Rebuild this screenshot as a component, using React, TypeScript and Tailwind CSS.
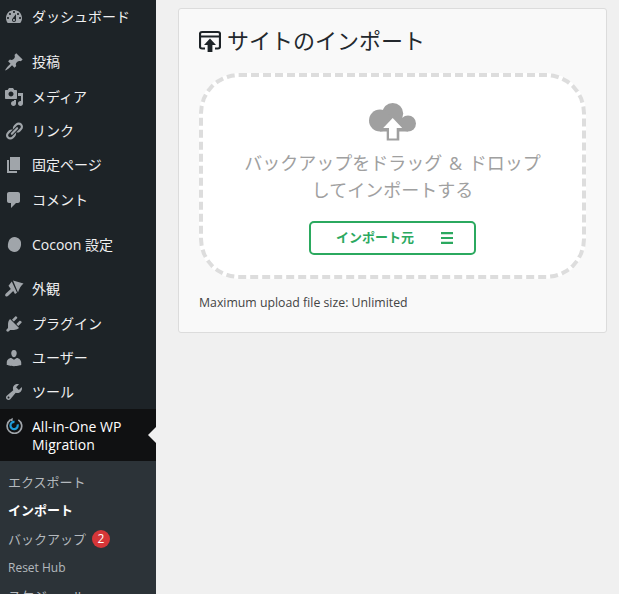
const fontStack = '[font-family:"Open_Sans","Noto_Sans_CJK_JP",sans-serif]'

const icons: Record<string, string> = {
  dashboard: 'M3.76 16h12.48c1.1-1.37 1.76-3.11 1.76-5 0-4.42-3.58-8-8-8s-8 3.58-8 8c0 1.89.66 3.63 1.76 5zM10 4c.55 0 1 .45 1 1s-.45 1-1 1-1-.45-1-1 .45-1 1-1zM6 6c.55 0 1 .45 1 1s-.45 1-1 1-1-.45-1-1 .45-1 1-1zm8 0c.55 0 1 .45 1 1s-.45 1-1 1-1-.45-1-1 .45-1 1-1zm-5.37 5.55L12 7v6c0 1.1-.9 2-2 2s-2-.9-2-2c0-.57.24-1.08.63-1.45zM4 10c.55 0 1 .45 1 1s-.45 1-1 1-1-.45-1-1 .45-1 1-1zm12 0c.55 0 1 .45 1 1s-.45 1-1 1-1-.45-1-1 .45-1 1-1zm-5 3c0-.55-.45-1-1-1s-1 .45-1 1 .45 1 1 1 1-.45 1-1z',
  post: 'M10.44 3.02l1.82-1.82 6.36 6.35-1.83 1.82c-1.05-.68-2.48-.57-3.41.36l-.75.75c-.92.93-1.04 2.35-.35 3.41l-1.83 1.82-2.41-2.41-2.8 2.79c-.42.42-3.38 2.71-3.8 2.29s1.86-3.39 2.28-3.81l2.79-2.79L4.1 9.36l1.83-1.82c1.05.69 2.48.57 3.4-.36l.75-.75c.93-.92 1.05-2.35.36-3.41z',
  media: 'M13 11V4c0-.55-.45-1-1-1h-1.67L9 1H5L3.67 3H2c-.55 0-1 .45-1 1v7c0 .55.45 1 1 1h10c.55 0 1-.45 1-1zM7 4.5c1.38 0 2.5 1.12 2.5 2.5S8.38 9.5 7 9.5 4.5 8.38 4.5 7 5.62 4.5 7 4.5zM14 6h5v10.5c0 1.38-1.12 2.5-2.5 2.5S14 17.88 14 16.5s1.12-2.5 2.5-2.5c.17 0 .34.02.5.05V9h-3V6zm-4 8.05V13h2v3.5c0 1.38-1.12 2.5-2.5 2.5S7 17.88 7 16.5 8.12 14 9.5 14c.17 0 .34.02.5.05z',
  links: 'M17.74 2.76c1.68 1.69 1.68 4.41 0 6.1l-1.53 1.52c-1.12 1.12-2.7 1.47-4.14 1.09l2.62-2.61.76-.77.76-.76c.84-.84.84-2.2 0-3.04-.84-.85-2.2-.85-3.04 0l-.77.76-3.38 3.38c-.37-1.44-.02-3.02 1.1-4.14l1.52-1.53c1.69-1.68 4.42-1.68 6.1 0zM8.59 13.43l5.34-5.34c.42-.42.42-1.1 0-1.52-.44-.43-1.13-.39-1.53 0l-5.33 5.34c-.42.42-.42 1.1 0 1.52.44.43 1.13.39 1.52 0zm-.76 2.29l4.14-4.15c.38 1.44.03 3.02-1.09 4.14l-1.52 1.53c-1.69 1.68-4.41 1.68-6.1 0-1.68-1.68-1.68-4.42 0-6.1l1.53-1.52c1.12-1.12 2.7-1.47 4.14-1.1l-4.14 4.15c-.85.84-.85 2.2 0 3.05.84.84 2.2.84 3.04 0z',
  page: 'M6 15V2h10v13H6zm-1 1h8v2H3V5h2v11z',
  comments: 'M5 2h9c1.1 0 2 .9 2 2v7c0 1.1-.9 2-2 2h-2l-5 5v-5H5c-1.1 0-2-.9-2-2V4c0-1.1.9-2 2-2z',
  appearance: 'M9 1.5L19.5 4.5C17 6.800 15.200 9.500 14 13.500zM7.800 2.500L13 13.800l-2 1.100-1.800-2.900-4.700 4.600c-1 .9-2 1.100-2.800.6-.8-.6-.7-1.700.2-2.700L6.800 10 4.500 6.800z',
  plugins: 'M13.11 4.36L9.87 7.6 8 5.73l3.24-3.24c.35-.34 1.05-.2 1.56.32.52.51.66 1.21.31 1.55zm-8 1.77l.91-1.12 9.01 9.01-1.19.84c-.71.71-2.63 1.16-3.82 1.16H6.14L4.9 17.26c-.59.59-1.54.59-2.12 0-.59-.58-.59-1.53 0-2.12l1.24-1.24v-3.88c0-1.13.4-3.19 1.09-3.89zm7.26 3.97l3.24-3.24c.34-.35 1.04-.21 1.55.31.52.51.66 1.21.31 1.55l-3.24 3.25z',
  users: 'M10 9.25c-2.27 0-2.73-3.44-2.73-3.44C7 4.02 7.82 2 9.97 2c2.16 0 2.98 2.02 2.71 3.81 0 0-.41 3.44-2.68 3.44zm0 2.57L12.72 10c2.39 0 4.52 2.33 4.52 4.53v2.49s-3.65 1.13-7.24 1.13c-3.65 0-7.24-1.13-7.24-1.13v-2.49c0-2.25 1.94-4.48 4.47-4.48z',
  tools: 'M16.68 9.77c-1.34 1.34-3.3 1.67-4.95.99l-5.41 6.52c-.99.99-2.59.99-3.58 0s-.99-2.59 0-3.57l6.52-5.42c-.68-1.65-.35-3.61.99-4.95 1.28-1.28 3.12-1.62 4.72-1.06l-2.89 2.89 2.82 2.82 2.86-2.87c.53 1.58.18 3.39-1.08 4.65zM3.81 16.21c.4.39 1.04.39 1.43 0 .4-.4.4-1.04 0-1.43-.39-.4-1.03-.4-1.43 0-.39.39-.39 1.03 0 1.43z',
}

function MenuIcon({ name }: { name: string }) {
  return (
    <svg className="w-5 h-5 shrink-0 text-[#a0a5aa]" viewBox="0 0 20 20" fill="currentColor">
      <path d={icons[name]} />
    </svg>
  )
}

function MenuItem({ icon, label, className = '' }: { icon: string; label: string; className?: string }) {
  return (
    <div className={`flex items-center h-[34.3px] pl-1 ${className}`}>
      <MenuIcon name={icon} />
      <span className="ml-2 text-sm text-[#f0f0f1]">{label}</span>
    </div>
  )
}

function Sidebar() {
  return (
    <div className="w-[156px] h-[594px] shrink-0 overflow-hidden bg-[#1d2327]">
      <MenuItem icon="dashboard" label="ダッシュボード" />
      <MenuItem icon="post" label="投稿" className="mt-[11px]" />
      <MenuItem icon="media" label="メディア" />
      <MenuItem icon="links" label="リンク" />
      <MenuItem icon="page" label="固定ページ" />
      <MenuItem icon="comments" label="コメント" />
      <div className="flex items-center h-[34.3px] pl-1 mt-[11px]">
        <div className="w-5 h-5 flex items-center justify-center shrink-0">
          <div className="w-[13px] h-[15px] rounded-full bg-[#a0a5aa] rotate-12" />
        </div>
        <span className="ml-2 text-sm text-[#f0f0f1]">Cocoon 設定</span>
      </div>
      <MenuItem icon="appearance" label="外観" className="mt-[10px]" />
      <MenuItem icon="plugins" label="プラグイン" />
      <MenuItem icon="users" label="ユーザー" />
      <MenuItem icon="tools" label="ツール" />
      <div className="relative flex items-start h-[52px] pl-[6px] pt-[9px] bg-[#101112]">
        <svg className="w-[17px] h-[17px] -mt-[1px] shrink-0" viewBox="0 0 20 20" fill="none">
          <path d="M14.5 3.4A8.6 8.6 0 1 1 5 3.6" stroke="#a0a5aa" strokeWidth="2" />
          <path d="M8 1l-.3 4.4L4 3.4z" fill="#a0a5aa" />
          <path d="M13.6 8.6a4.3 4.3 0 1 1-3.6-2.9" stroke="#1e9bd8" strokeWidth="2.6" />
        </svg>
        <span className="ml-[9px] text-sm leading-[18px] text-white">All-in-One WP Migration</span>
        <div className="absolute right-0 top-[18px] border-y-[8px] border-r-[8px] border-y-transparent border-r-[#f0f0f0]" />
      </div>
      <div className="bg-[#2c3338] pt-[7px] h-[140px] text-[13px] text-[#b4b9be]">
        <div className="flex items-center h-[28px] pl-2">エクスポート</div>
        <div className="flex items-center h-[29px] pl-2 font-bold text-white">インポート</div>
        <div className="flex items-center h-[28px] pl-2">
          バックアップ
          <span className="ml-[6px] w-[18px] h-[18px] rounded-full bg-[#d63638] text-white text-xs flex items-center justify-center">2</span>
        </div>
        <div className="flex items-center h-[29px] pl-2 text-xs">Reset Hub</div>
        <div className="flex items-center h-[28px] pl-2">スケジュール</div>
      </div>
    </div>
  )
}

function ImportPanel() {
  return (
    <div className="w-[429px] h-[325px] ml-[22px] mt-2 px-5 pt-4 bg-[#f9f9f9] border border-[#dcdcdc] rounded-[3px]">
      <div className="flex items-center h-[31px]">
        <svg className="w-[22px] h-[22px] shrink-0 text-[#1d2327]" viewBox="0 0 22 22" fill="none">
          <path d="M6 18.5H3a2 2 0 0 1-2-2V4a2 2 0 0 1 2-2h16a2 2 0 0 1 2 2v12.5a2 2 0 0 1-2 2h-3" stroke="currentColor" strokeWidth="2.2" />
          <path d="M2 6.5h18" stroke="currentColor" strokeWidth="2" />
          <path d="M11 8.5l6 6.5h-3.6v7H8.6v-7H5z" fill="currentColor" />
        </svg>
        <h1 className="ml-[6px] text-[22px] text-[#23282d]">サイトのインポート</h1>
      </div>
      <div className="mt-[17px] w-[387px] h-[206px] flex flex-col items-center pt-[26px] bg-white border-4 border-dashed border-[#dddddd] rounded-[40px]">
        <svg className="w-[47px] h-[38px]" viewBox="0 0 47 38" fill="#a0a0a0">
          <circle cx="23.7" cy="10.5" r="10.5" />
          <circle cx="11" cy="17.5" r="11" />
          <circle cx="39" cy="20.5" r="8" />
          <rect x="11" y="15" width="28" height="13.5" />
          <rect x="17.7" y="25" width="12.6" height="12.5" />
          <rect x="20" y="24" width="7.7" height="11.5" fill="#fff" />
          <path d="M23.7 15l9.5 10H14.2z" fill="#fff" />
        </svg>
        <p className="mt-[9px] w-[310px] text-center text-lg leading-[27px] [word-spacing:2px] text-[#a0a0a0]">バックアップをドラッグ &amp; ドロップしてインポートする</p>
        <button className="mt-[17px] w-[167px] h-[34px] flex items-center border-2 border-[#2ba95f] rounded-[5px] bg-white text-[#2ba95f]">
          <span className="ml-[25px] text-[13px] font-bold">インポート元</span>
          <svg className="ml-[27px] w-3 h-3" viewBox="0 0 12 12" fill="currentColor">
            <path d="M0 0h12v2.2H0zM0 4.9h12v2.2H0zM0 9.8h12V12H0z" />
          </svg>
        </button>
      </div>
      <p className="mt-[15px] text-[12.3px] text-[#444]">Maximum upload file size: Unlimited</p>
    </div>
  )
}

export default function App() {
  return (
    <div className={`flex w-[619px] h-[594px] overflow-hidden bg-[#f0f0f0] ${fontStack}`}>
      <Sidebar />
      <ImportPanel />
    </div>
  )
}
